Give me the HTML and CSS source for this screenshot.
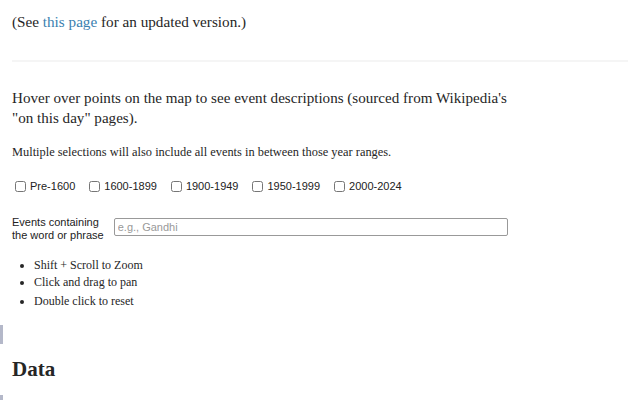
FILE: index.html
```html
<!DOCTYPE html>
<html>
<head>
<meta charset="utf-8">
<link rel="stylesheet" href="styles.css">
</head>
<body>
<div class="side-mark side-mark-a"></div>
<div class="side-mark side-mark-b"></div>
<main class="page">
  <p class="note">(See <a href="#" class="link">this page</a> for an updated version.)</p>
  <hr class="rule">
  <p class="intro">Hover over points on the map to see event descriptions (sourced from Wikipedia's "on this day" pages).</p>
  <p class="small">Multiple selections will also include all events in between those year ranges.</p>
  <div class="checks">
    <label class="check"><input type="checkbox" class="box"> Pre-1600</label>
    <label class="check"><input type="checkbox" class="box"> 1600-1899</label>
    <label class="check"><input type="checkbox" class="box"> 1900-1949</label>
    <label class="check"><input type="checkbox" class="box"> 1950-1999</label>
    <label class="check"><input type="checkbox" class="box"> 2000-2024</label>
  </div>
  <div class="search">
    <label class="search-label" for="q">Events containing<br>the word or phrase</label>
    <input id="q" class="search-input" type="text" placeholder="e.g., Gandhi">
  </div>
  <ul class="tips">
    <li>Shift + Scroll to Zoom</li>
    <li>Click and drag to pan</li>
    <li class="last">Double click to reset</li>
  </ul>
  <h2 class="heading">Data</h2>
</main>
</body>
</html>
```
FILE: styles.css
```css
html, body {
  margin: 0;
  padding: 0;
  background: #fff;
}
body {
  font-family: "Liberation Serif", serif;
  color: #262626;
  position: relative;
  height: 400px;
  overflow: hidden;
}
.page {
  padding: 0 12px;
}
.note {
  margin: 0;
  padding-top: 12px;
  font-size: 15.2px;
  line-height: 20px;
}
.link {
  color: #3a7fb0;
  text-decoration: none;
}
.rule {
  border: 0;
  height: 2px;
  background: #f5f5f5;
  margin: 28px 0 0;
}
.intro {
  margin: 27px 0 0;
  font-size: 15.1px;
  line-height: 19.5px;
  max-width: 505px;
}
.small {
  margin: 16px 0 0;
  font-size: 12.4px;
  line-height: 16px;
}
.checks {
  display: flex;
  gap: 11px;
  margin-top: 20px;
  font-family: "Liberation Sans", sans-serif;
  font-size: 11px;
  color: #222;
}
.check {
  display: flex;
  align-items: center;
  gap: 4px;
}
.box {
  width: 11px;
  height: 11px;
  margin: 0 0 0 3px;
}
.search {
  display: flex;
  align-items: center;
  gap: 10px;
  margin-top: 24px;
  font-family: "Liberation Sans", sans-serif;
  font-size: 11px;
}
.search-label {
  line-height: 12.5px;
  color: #222;
}
.search-input {
  width: 394px;
  height: 18px;
  box-sizing: border-box;
  border: 1px solid #999;
  border-radius: 2px;
  padding: 0 3px;
  font-family: "Liberation Sans", sans-serif;
  font-size: 11px;
  margin-top: -3px;
}
.search-input::placeholder {
  color: #999;
}
.tips {
  margin: 16px 0 0;
  padding-left: 22px;
  font-size: 12px;
  line-height: 17px;
}
.tips .last {
  margin-top: 2px;
}
.heading {
  margin: 46px 0 0;
  font-size: 21px;
  font-weight: bold;
  line-height: 26px;
}
.side-mark {
  position: absolute;
  left: 0;
  width: 3px;
  background: #b4b8c9;
}
.side-mark-a {
  top: 325px;
  height: 19px;
}
.side-mark-b {
  top: 395px;
  height: 5px;
}
```
